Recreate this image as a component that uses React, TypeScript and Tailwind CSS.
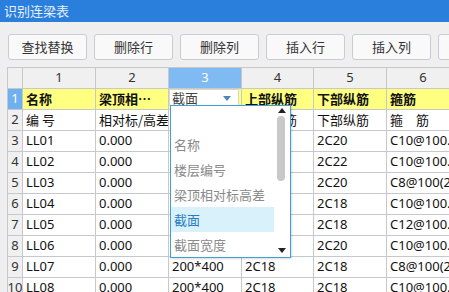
import React from "react";

const FONT = { fontFamily: '"Noto Sans", "Noto Sans CJK SC", sans-serif' };
const CJK = { fontFamily: '"Noto Sans CJK SC", "Noto Sans", sans-serif' };

const colW = ["w-[15px]", "w-[73px]", "w-[73px]", "w-[73px]", "w-[72px]", "w-[73px]", "w-[73px]"];

const col5 = ["2C20", "2C22", "2C20", "2C18", "2C18", "2C20", "2C18", "2C18"];
const col6 = ["C10@100.", "C10@100.", "C8@100(2", "C10@100.", "C12@100.", "C10@100.", "C8@100(2", "C10@100."];

const rows: string[][] = [
  ["名称", "梁顶相…", "", "上部纵筋", "下部纵筋", "箍筋"],
  ["编 号", "相对标/高差", "", "上部纵筋", "下部纵筋", "箍　筋"],
  ...col5.map((c, i) => [
    `LL0${i + 1}`,
    "0.000",
    i >= 6 ? "200*400" : "",
    i >= 6 ? "2C18" : "",
    c,
    col6[i],
  ]),
];

function Btn({ label }: { label: string }) {
  return (
    <div className="w-[79px] h-[26px] shrink-0 rounded-[3px] border border-[#c9ccd4] bg-[#f9f9f9] flex items-center justify-center text-[13px] text-[#333]" style={CJK}>
      {label}
    </div>
  );
}

export default function App() {
  return (
    <div className="relative w-[449px] h-[292px] overflow-hidden bg-[#efefef]" style={FONT}>
      <div className="h-[22px] bg-[#2b7fdc] text-[#e6efff] text-[13px] leading-[22px] pl-[4px]" style={CJK}>
        识别连梁表
      </div>
      <div className="h-[45px] pt-[12px] pl-[8px] flex gap-[7px]">
        {["查找替换", "删除行", "删除列", "插入行", "插入列", ""].map((l, i) => (
          <Btn key={i} label={l} />
        ))}
      </div>
      <div className="ml-[7px] border-l border-t border-[#c6c8ce] bg-white w-[460px]">
        <div className="flex h-[21px] text-[13px] text-[#333]">
          {colW.map((w, i) => (
            <div
              key={i}
              className={`${w} shrink-0 border-r border-b border-[#c6c8ce] flex items-center justify-center ${i === 3 ? "bg-[#80baf2] text-white" : "bg-[#f0f0f0]"}`}
            >
              {i === 0 ? "" : i}
            </div>
          ))}
        </div>
        {rows.map((r, ri) => (
          <div key={ri} className="flex h-[21px] text-[13px]">
            <div
              className={`${colW[0]} shrink-0 border-r border-b border-[#c6c8ce] flex items-center justify-center overflow-hidden whitespace-nowrap ${ri === 0 ? "bg-[#6fb0f0] text-white" : "bg-[#f0f0f0] text-[#333]"}`}
            >
              {ri + 1}
            </div>
            {r.map((t, ci) => (
              <div
                key={ci}
                className={`${colW[ci + 1]} shrink-0 border-r border-b border-[#c6c8ce] flex items-center pl-[3px] overflow-hidden whitespace-nowrap text-[#111] ${ri === 0 ? "bg-[#ffff80] font-bold" : "bg-white"}`}
                style={/[\u4e00-\u9fff]/.test(t) ? CJK : undefined}
              >
                {t}
              </div>
            ))}
          </div>
        ))}
      </div>

      {/* select box */}
      <div className="absolute left-[169px] top-[89px] w-[70px] h-[17px] bg-white border border-[#d8d8c8] flex items-center pl-[2px] text-[13px] text-[#444]" style={CJK}>
        截面
        <svg className="absolute right-[7px] top-[6px]" width="8" height="5" viewBox="0 0 8 5">
          <polygon points="0,0 8,0 4,5" fill="#4f86b8" />
        </svg>
      </div>

      {/* dropdown list */}
      <div className="absolute left-[170px] top-[105px] w-[121px] h-[153px] bg-white border border-[#3fa0d6] shadow-[1px_1px_2px_rgba(0,0,0,0.15)]">
        <div className="flex flex-col pt-[1px]" style={CJK}>
          {["", "名称", "楼层编号", "梁顶相对标高差", "截面", "截面宽度"].map((t, i) => (
            <div
              key={i}
              className={`h-[25px] w-[103px] pl-[3px] flex items-center text-[13px] whitespace-nowrap overflow-hidden ${i === 4 ? "bg-[#d9f1fb] text-[#2b7cc4]" : "text-[#8a8a8a]"}`}
            >
              {t}
            </div>
          ))}
        </div>
        <svg className="absolute left-[107px] top-[2px]" width="8" height="5" viewBox="0 0 8 5">
          <polygon points="0,5 8,5 4,0" fill="#222" />
        </svg>
        <div className="absolute left-[106px] top-[10px] w-[8px] h-[65px] rounded-[4px] bg-[#c8c8c8]" />
        <svg className="absolute left-[107px] top-[142px]" width="8" height="5" viewBox="0 0 8 5">
          <polygon points="0,0 8,0 4,5" fill="#222" />
        </svg>
      </div>
    </div>
  );
}
